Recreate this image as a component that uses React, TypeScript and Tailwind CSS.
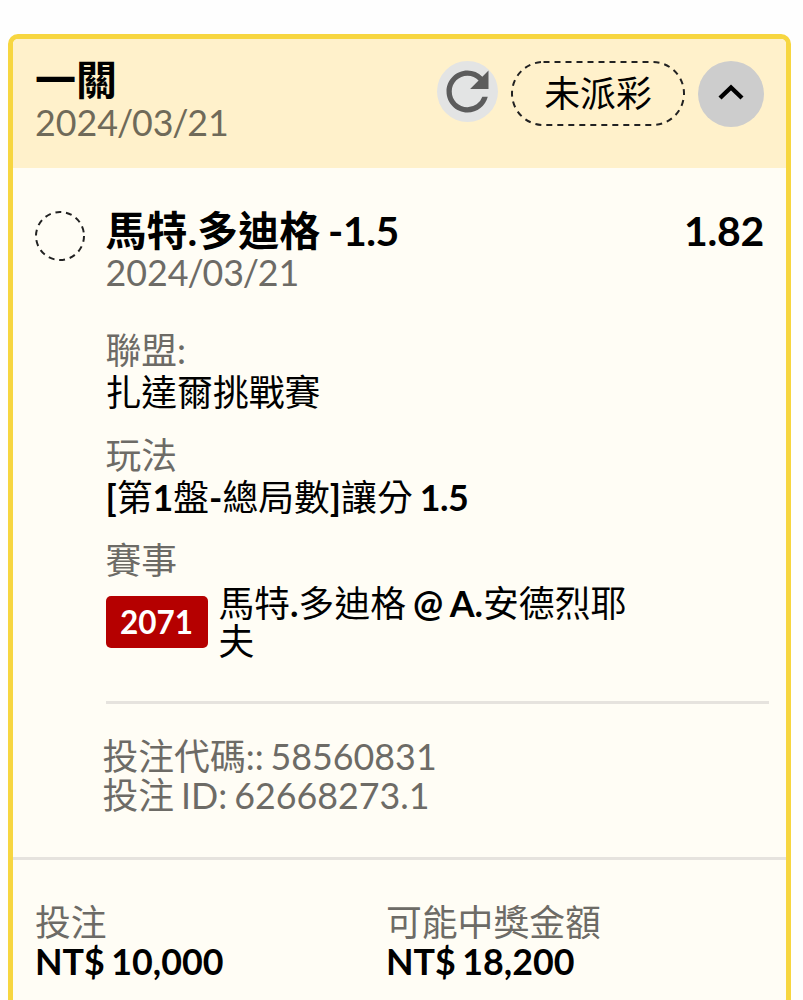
import React from 'react';
import { MdRefresh } from 'react-icons/md';

interface DetailProps {
  label: string;
  children: React.ReactNode;
}

const Detail: React.FC<DetailProps> = ({ label, children }) => (
  <div className="mb-[21px]">
    <p className="h-[42px] leading-[42px] text-[#6d6b66]">{label}</p>
    <div className="h-[42px] leading-[42px]">{children}</div>
  </div>
);

const BetDate: React.FC = () => (
  <>
    2024<span className="-mx-[1.2px]">/</span>03<span className="-mx-[1.2px]">/</span>21
  </>
);

const App: React.FC = () => {
  return (
    <div className="h-[1000px] w-[803px] overflow-hidden bg-[#fefefe] pt-[34px] pl-[8px] font-['Lato','Noto_Sans_CJK_TC',sans-serif] text-[35.8px] text-black [word-spacing:-2.2px]">
      <div className="h-[975px] w-[783px] overflow-hidden rounded-[10px] border-[5px] border-[#f7d640] bg-[#fffdf5]">
        {/* Header */}
        <div className="flex h-[129px] justify-between bg-[#fff1cb] pr-[22px] pl-[22px]">
          <div className="pt-[20px]">
            <h1 className="h-[42px] text-[41px] leading-[42px] font-bold">一關</h1>
            <p className="h-[43px] leading-[43px] text-[#6f6a59]">
              <BetDate />
            </p>
          </div>
          <div className="flex pt-[22px]">
            <div className="flex h-[61px] w-[61px] items-center justify-center rounded-full bg-[#e3e4e4]">
              <MdRefresh className="h-[63px] w-[63px] shrink-0 text-[#5c5c5c]" />
            </div>
            <div className="relative ml-[13px] h-[65px] w-[174px]">
              <svg viewBox="0 0 174 65" className="absolute h-[65px] w-[174px]">
                <rect x="1" y="1" width="172" height="63" rx="31.5" fill="none" stroke="#222" strokeWidth="2" strokeDasharray="6 5" />
              </svg>
              <p className="text-center leading-[66px]">未派彩</p>
            </div>
            <div className="ml-[13px] flex h-[66px] w-[66px] items-center justify-center rounded-full bg-[#cdcdcd]">
              <svg viewBox="0 0 26 16" className="mb-[4px] h-[16px] w-[26px]">
                <path d="M2 14 L13 3.5 L24 14" fill="none" stroke="#000" strokeWidth="4.4" />
              </svg>
            </div>
          </div>
        </div>

        {/* Selection */}
        <div className="flex h-[692px] border-b-[3px] border-[#e6e3de] pt-[42px] pr-[17px] pl-[22px]">
          <svg viewBox="0 0 50 50" className="mt-[1px] h-[50px] w-[50px] shrink-0">
            <circle cx="25" cy="25" r="24" fill="none" stroke="#222" strokeWidth="2" strokeDasharray="6 4.77" />
          </svg>
          <div className="ml-[20.5px] flex-1">
            <div className="flex h-[42px] justify-between pr-[5px] text-[41px] leading-[42px] font-bold">
              <h2>
                馬特.多迪格 <span className="tracking-[-0.4px]">-1.5</span>
              </h2>
              <span className="tracking-[-0.3px]">1.82</span>
            </div>
            <p className="mb-[36px] h-[42px] leading-[42px] text-[#6d6b66]">
              <BetDate />
            </p>

            <Detail label="聯盟:">扎達爾挑戰賽</Detail>
            <Detail label="玩法">
              <b>[</b>第<b>1</b>盤<b>-</b>總局數<b>]</b>讓分 <b className="tracking-[-0.5px]">1.5</b>
            </Detail>
            <p className="h-[42px] leading-[42px] text-[#6d6b66]">賽事</p>
            <div className="flex h-[80px] items-center">
              <span className="h-[52px] w-[102px] rounded-[5px] bg-[#b50000] text-center text-[31.5px] leading-[52px] font-bold text-white">
                2071
              </span>
              <p className="ml-[11px] w-[430px] pt-[2px] leading-[38.5px]">
                馬特<b>.</b>多迪格 <b>@ A.</b>安德烈耶夫
              </p>
            </div>
            <div className="mt-[39px] mb-[33px] h-[3px] bg-[#e6e3de]" />
            <div className="-ml-[3px] leading-[39px] text-[#6d6b66]">
              <p>投注代碼:: 58560831</p>
              <p>投注 ID: 62668273.1</p>
            </div>
          </div>
        </div>

        {/* Totals */}
        <div className="flex pt-[43px] pl-[22px] leading-[39px]">
          <div className="w-[351px]">
            <p className="h-[39px] text-[#6d6b66]">投注</p>
            <p className="font-bold">NT$ 10,000</p>
          </div>
          <div>
            <p className="h-[39px] text-[#6d6b66]">可能中獎金額</p>
            <p className="font-bold">NT$ 18,200</p>
          </div>
        </div>
      </div>
    </div>
  );
};

export default App;
